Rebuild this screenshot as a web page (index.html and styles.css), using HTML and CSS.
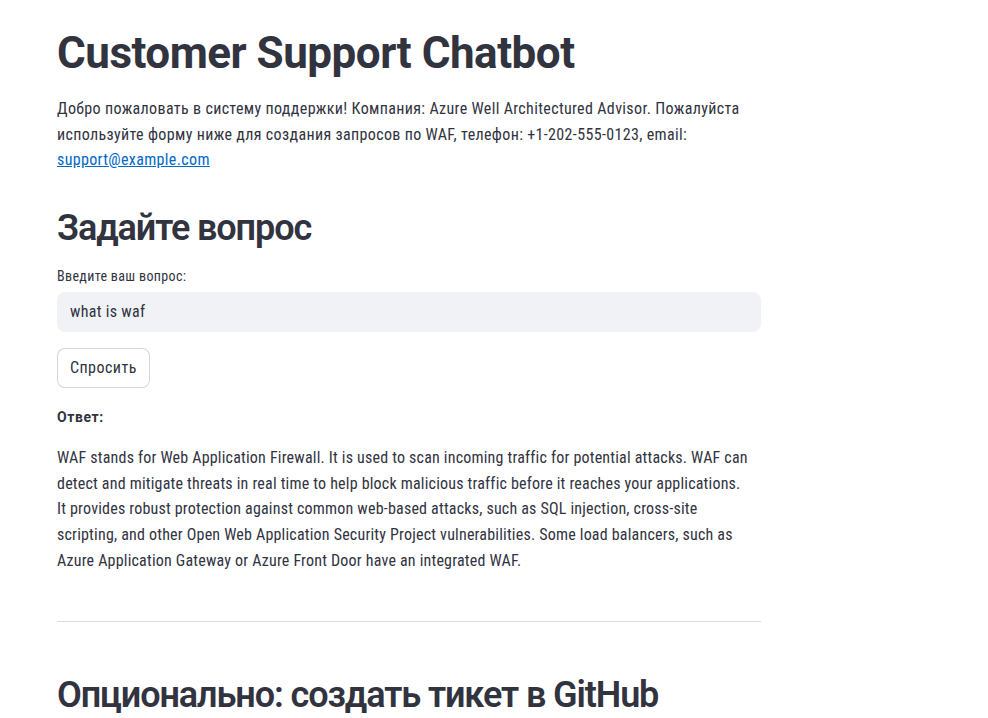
FILE: index.html
```html
<!DOCTYPE html>
<html lang="ru">
<head>
<meta charset="utf-8">
<title>Customer Support Chatbot</title>
<link rel="stylesheet" href="styles.css">
</head>
<body>
<main class="block">
  <h1 class="title">Customer Support Chatbot</h1>
  <p class="intro">Добро пожаловать в систему поддержки! Компания: Azure Well Architectured Advisor. Пожалуйста используйте форму ниже для создания запросов по WAF, телефон: +1-202-555-0123, email: <a href="#" class="link">support@example.com</a></p>
  <h2 class="section">Задайте вопрос</h2>
  <label class="label" for="q">Введите ваш вопрос:</label>
  <div class="input-wrap"><input id="q" class="input" type="text" value="what is waf"></div>
  <button class="btn" type="button">Спросить</button>
  <p class="answer-label">Ответ:</p>
  <p class="answer">WAF stands for Web Application Firewall. It is used to scan incoming traffic for potential attacks. WAF can detect and mitigate threats in real time to help block malicious traffic before it reaches your applications. It&nbsp;provides robust protection against common web-based attacks, such as SQL injection, cross-site scripting, and other Open Web Application Security Project vulnerabilities. Some load balancers, such as Azure Application Gateway or Azure Front Door have an integrated WAF.</p>
  <hr class="divider">
  <h2 class="section section-2">Опционально: создать тикет в GitHub</h2>
</main>
</body>
</html>
```
FILE: styles.css
```css
* { box-sizing: border-box; }
html, body { margin: 0; padding: 0; background: #ffffff; }
body {
  font-family: Roboto, "Noto Sans", sans-serif;
  font-stretch: 87.5%;
  color: #31333f;
  font-size: 16px;
  letter-spacing: 0.2px;
  overflow: hidden;
}
.block {
  width: 704px;
  margin-left: 57px;
  padding-top: 27px;
}
.title {
  margin: 0;
  font-size: 44px;
  font-weight: 700;
  font-stretch: 100%;
  line-height: 53px;
  letter-spacing: -0.5px;
}
.intro {
  margin: 16px 0 0;
  font-size: 16px;
  line-height: 25.6px;
  letter-spacing: 0.35px;
}
.link { color: #0068c9; }
.section {
  margin: 34px 0 0;
  font-size: 36px;
  font-weight: 600;
  font-stretch: 100%;
  line-height: 43px;
  letter-spacing: -1.1px;
}
.label {
  display: block;
  margin-top: 17px;
  font-size: 14px;
  line-height: 18px;
  letter-spacing: 0.35px;
}
.input-wrap { margin-top: 7px; }
.input {
  display: block;
  width: 100%;
  height: 40px;
  border: 1px solid #f0f2f6;
  border-radius: 8px;
  background: #f0f2f6;
  padding: 0 12px;
  font: inherit;
  letter-spacing: 0.3px;
  color: #31333f;
  outline: none;
}
.btn {
  display: block;
  margin-top: 16px;
  height: 40px;
  padding: 0 12px;
  background: #ffffff;
  border: 1px solid rgba(49, 51, 63, 0.2);
  border-radius: 8px;
  font: inherit;
  letter-spacing: 0.45px;
  color: #31333f;
}
.answer-label {
  margin: 19px 0 0;
  font-size: 14px;
  font-weight: 700;
  font-stretch: 100%;
  line-height: 20px;
  letter-spacing: 0.6px;
}
.answer {
  margin: 18px 0 0;
  line-height: 25.8px;
}
.divider {
  margin: 47px 0 0;
  border: 0;
  border-top: 1px solid #dcdcdf;
}
.section-2 { margin-top: 52px; }
```
